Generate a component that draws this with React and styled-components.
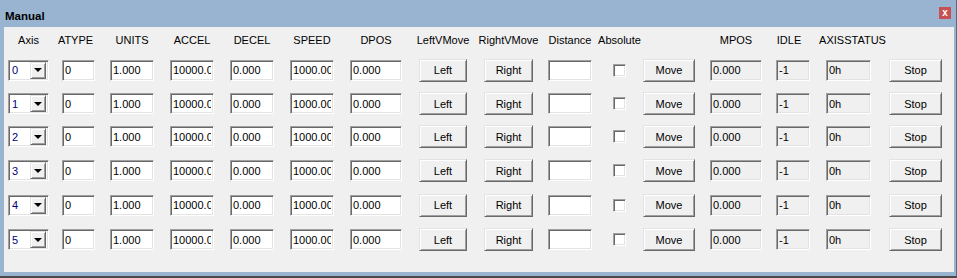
import React from 'react'
import styled, { createGlobalStyle } from 'styled-components'

const Global = createGlobalStyle`
  html, body {
    margin: 0;
    padding: 0;
    background: #ffffff;
  }
  * {
    box-sizing: border-box;
  }
`;

const Window = styled.div`
  width: 957px;
  height: 278px;
  display: flex;
  flex-direction: column;
  background: #99b4d1;
  border-right: 1px solid #5a6b7d;
  border-bottom: 2px solid #4a4a4a;
  font-family: "Liberation Sans", Arial, sans-serif;
`;

const TitleBar = styled.div`
  height: 27px;
  flex: none;
  display: flex;
  align-items: flex-start;
  justify-content: space-between;
  padding: 0 5px 0 5px;
`;

const Title = styled.div`
  font-weight: bold;
  font-size: 11.5px;
  line-height: 14px;
  margin-top: 9px;
  color: #000;
`;

const CloseBox = styled.div`
  width: 12px;
  height: 12px;
  margin-top: 7px;
  background: #c75050;
  color: #fff;
  font-size: 10px;
  font-weight: bold;
  line-height: 11px;
  text-align: center;
`;

const Client = styled.div`
  flex: 1;
  margin: 0 2px 4px 4px;
  background: #f0f0f0;
  padding-left: 4px;
`;

const Grid = styled.div`
  display: grid;
  grid-template-columns: ${p => p.$cols};
  grid-template-rows: 26px 34px 33px 33px 35px 34px 35px;
  align-items: center;
  justify-items: start;
`;

const Header = styled.div`
  width: ${p => p.$w}px;
  display: flex;
  justify-content: center;
  white-space: nowrap;
  font-size: 11px;
  color: #000;
  margin-left: ${p => p.$shift || 0}px;
`;

const Field = styled.input`
  width: ${p => p.$w}px;
  height: 21px;
  margin: 0;
  padding: 0 2px;
  font-family: "Liberation Sans", Arial, sans-serif;
  font-size: 11px;
  color: #000;
  background: ${p => (p.readOnly ? '#f0f0f0' : '#ffffff')};
  border: 1px solid;
  border-color: #a0a0a0 #ffffff #ffffff #a0a0a0;
  box-shadow: inset 1px 1px 0 #696969, inset -1px -1px 0 #e3e3e3;
  outline: none;
`;

const Combo = styled.div`
  width: ${p => p.$w}px;
  height: 21px;
  display: flex;
  align-items: center;
  justify-content: space-between;
  padding: 1px 2px 1px 3px;
  background: #fff;
  border: 1px solid;
  border-color: #a0a0a0 #ffffff #ffffff #a0a0a0;
  box-shadow: inset 1px 1px 0 #696969, inset -1px -1px 0 #e3e3e3;
  font-size: 11px;
  color: #000080;
`;

const DropButton = styled.div`
  width: 16px;
  height: 17px;
  display: flex;
  align-items: center;
  justify-content: center;
  background: #f0f0f0;
  border: 1px solid;
  border-color: #e3e3e3 #696969 #696969 #e3e3e3;
  box-shadow: inset 1px 1px 0 #fff, inset -1px -1px 0 #a0a0a0;
`;

const Arrow = styled.div`
  width: 0;
  height: 0;
  border-left: 4px solid transparent;
  border-right: 4px solid transparent;
  border-top: 4px solid #000;
`;

const Button = styled.button`
  width: ${p => p.$w}px;
  height: 23px;
  margin: 0;
  padding: 0;
  font-family: "Liberation Sans", Arial, sans-serif;
  font-size: 11px;
  color: #000;
  background: #f0f0f0;
  border: 1px solid;
  border-color: #e3e3e3 #696969 #696969 #e3e3e3;
  box-shadow: inset 1px 1px 0 #fff, inset -1px -1px 0 #a0a0a0;
`;

const Check = styled.div`
  width: 13px;
  height: 13px;
  background: #fff;
  border: 1px solid;
  border-color: #a0a0a0 #ffffff #ffffff #a0a0a0;
  box-shadow: inset 1px 1px 0 #696969, inset -1px -1px 0 #e3e3e3;
`;

const columns = [
  { key: 'axis', label: 'Axis', start: 8, w: 41, kind: 'combo' },
  { key: 'atype', label: 'ATYPE', start: 62, w: 33, kind: 'input', value: '0', shift: -3 },
  { key: 'units', label: 'UNITS', start: 110, w: 44, kind: 'input', value: '1.000' },
  { key: 'accel', label: 'ACCEL', start: 170, w: 44, kind: 'input', value: '10000.000' },
  { key: 'decel', label: 'DECEL', start: 230, w: 44, kind: 'input', value: '0.000' },
  { key: 'speed', label: 'SPEED', start: 290, w: 44, kind: 'input', value: '1000.000' },
  { key: 'dpos', label: 'DPOS', start: 350, w: 52, kind: 'input', value: '0.000' },
  { key: 'left', label: 'LeftVMove', start: 419, w: 48, kind: 'button', value: 'Left' },
  { key: 'right', label: 'RightVMove', start: 484, w: 49, kind: 'button', value: 'Right' },
  { key: 'dist', label: 'Distance', start: 548, w: 44, kind: 'input', value: '' },
  { key: 'abs', label: 'Absolute', start: 613, w: 13, kind: 'check' },
  { key: 'move', label: '', start: 643, w: 52, kind: 'button', value: 'Move' },
  { key: 'mpos', label: 'MPOS', start: 710, w: 52, kind: 'readonly', value: '0.000' },
  { key: 'idle', label: 'IDLE', start: 776, w: 34, kind: 'readonly', value: '-1', shift: -4 },
  { key: 'status', label: 'AXISSTATUS', start: 826, w: 45, kind: 'readonly', value: '0h', shift: 4 },
  { key: 'stop', label: '', start: 889, w: 53, kind: 'button', value: 'Stop' },
];

const template = columns
  .map((c, i) => (i < columns.length - 1 ? columns[i + 1].start - c.start : c.w) + 'px')
  .join(' ');

const axes = [0, 1, 2, 3, 4, 5];

const Control = ({ col, axis }) => {
  switch (col.kind) {
    case 'combo':
      return (
        <Combo $w={col.w}>
          <span>{axis}</span>
          <DropButton><Arrow /></DropButton>
        </Combo>
      );
    case 'button':
      return <Button $w={col.w}>{col.value}</Button>;
    case 'check':
      return <Check />;
    case 'readonly':
      return <Field $w={col.w} readOnly value={col.value} />;
    default:
      return <Field $w={col.w} defaultValue={col.value} />;
  }
};

export default function App() {
  return (
    <>
      <Global />
      <Window>
        <TitleBar>
          <Title>Manual</Title>
          <CloseBox>x</CloseBox>
        </TitleBar>
        <Client>
          <Grid $cols={template}>
            {columns.map(col => (
              <Header key={col.key} $w={col.w} $shift={col.shift}>{col.label}</Header>
            ))}
            {axes.map(axis =>
              columns.map(col => <Control key={axis + col.key} col={col} axis={axis} />)
            )}
          </Grid>
        </Client>
      </Window>
    </>
  );
}
